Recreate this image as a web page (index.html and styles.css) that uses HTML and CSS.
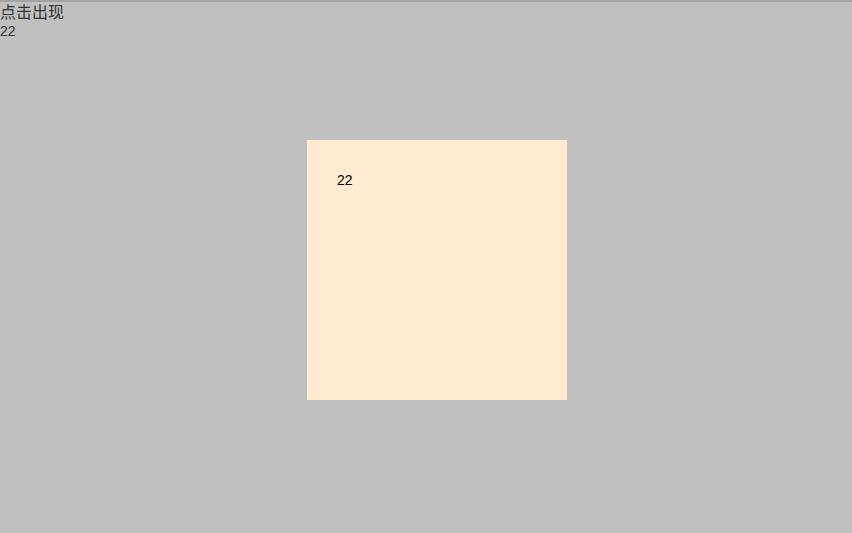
FILE: index.html
```html
<!DOCTYPE html>
<html>
<head>
<meta charset="utf-8">
<link rel="stylesheet" href="styles.css">
</head>
<body>
<div class="page">
  <div class="title">点击出现</div>
  <div class="count">22</div>
  <div class="panel">
    <div class="panel-text">22</div>
  </div>
</div>
</body>
</html>
```
FILE: styles.css
```css
html, body {
  margin: 0;
  padding: 0;
  height: 100%;
  background: #c0c0c0;
}
.page {
  border-top: 2px solid #a3a3a3;
  min-height: 100%;
  box-sizing: border-box;
  font-family: "Noto Sans CJK SC", "DejaVu Sans", sans-serif;
  font-size: 16px;
  color: #333;
}
.title {
  line-height: 18px;
}
.count {
  font-family: "Liberation Sans", sans-serif;
  font-size: 14px;
  line-height: 20px;
  margin-top: 1px;
}
.panel {
  width: 260px;
  height: 260px;
  background: #ffebcd;
  margin-left: 307px;
  margin-top: 99px;
  box-sizing: border-box;
  padding: 30px;
}
.panel-text {
  font-family: "Liberation Sans", sans-serif;
  font-size: 14px;
  line-height: 20px;
  color: #000;
}
```
